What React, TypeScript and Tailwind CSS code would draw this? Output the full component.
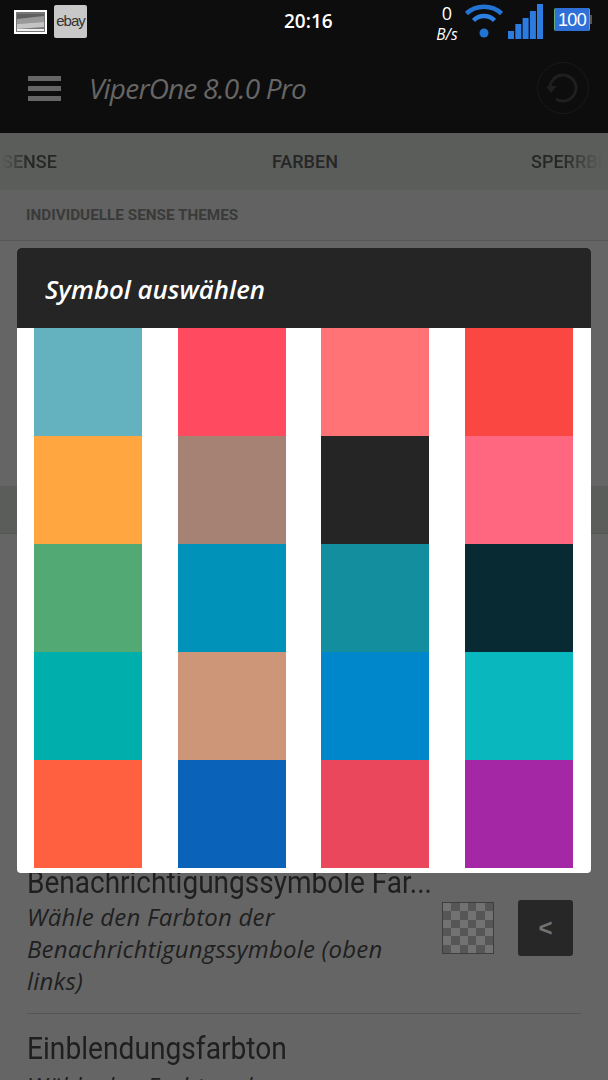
import React from 'react';

const swatches: string[] = [
  '#64b2bf', '#ff4a60', '#ff7276', '#fb4741',
  '#ffa640', '#a68274', '#252525', '#ff6680',
  '#53a973', '#0092b8', '#128e9f', '#082a32',
  '#00afab', '#ce9678', '#0086cb', '#08b8be',
  '#ff6040', '#0a63b9', '#eb475c', '#a428a5',
];

const comic = "font-['Open_Sans',sans-serif] italic";

function Wifi() {
  return (
    <svg width="38" height="34" viewBox="0 0 38 34" fill="none">
      <path d="M1.5 9.5 C11 0.5 27 0.5 36.5 9.5" stroke="#2373d2" strokeWidth="4.5" />
      <path d="M8.5 16.5 C14 10.5 24 10.5 29.5 16.5" stroke="#2b80e2" strokeWidth="4.5" />
      <circle cx="19" cy="29" r="4.5" fill="#2274d4" />
    </svg>
  );
}

function Signal() {
  return (
    <svg width="35" height="35" viewBox="0 0 35 35" fill="#2c7be0">
      <rect x="0" y="27" width="6" height="8" />
      <rect x="7.3" y="20" width="6" height="15" />
      <rect x="14.6" y="14" width="6" height="21" />
      <rect x="21.9" y="7" width="6" height="28" />
      <rect x="29" y="0" width="6" height="35" />
    </svg>
  );
}

function Battery() {
  return (
    <div className="relative flex h-[23px] w-[36px] items-center justify-center rounded-[2px] border-x border-[#5fae7a] bg-[#2f6fd8] font-['Liberation_Sans',sans-serif] text-[18px] leading-none tracking-[-0.6px] text-white">
      100
      <span className="absolute -right-[3px] top-[7px] h-[9px] w-[2px] bg-[#555]" />
    </div>
  );
}

function Thumb() {
  return (
    <svg width="33" height="24" viewBox="0 0 33 24">
      <rect x="1" y="1" width="31" height="22" fill="#777" stroke="#fff" strokeWidth="2" />
      <rect x="3" y="4" width="27" height="5" fill="#606060" />
      <path d="M3 9 L30 6 V12 L3 14Z" fill="#999" />
      <path d="M3 14 L30 12 V17 L3 19Z" fill="#c4c4c4" />
      <rect x="3" y="19" width="27" height="2" fill="#eee" />
    </svg>
  );
}

function Checker() {
  const cells = Array.from({ length: 36 }, (_, i) => i);
  return (
    <div className="grid h-[52px] w-[52px] grid-cols-6 grid-rows-6 border border-[#3e3e3e] bg-[#727272]">
      {cells.map((i) => (
        <span key={i} className={(Math.floor(i / 6) + i % 6) % 2 === 1 ? 'bg-[#565656]' : 'bg-[#727272]'} />
      ))}
    </div>
  );
}

export default function App() {
  return (
    <div className="relative h-[1080px] w-[608px] overflow-hidden bg-[#656565]">
      {/* Top bar */}
      <div className="h-[133px] bg-[#0d0d0d]">
        <div className="flex h-[45px] items-start pl-[14px] pt-[5px]">
          <div className="mt-[5px] flex h-[24px] w-[33px] items-center justify-center">
            <Thumb />
          </div>
          <div className="ml-[7px] flex h-[33px] w-[33px] items-center justify-center rounded-[2px] bg-[#c8c8c8] font-['Liberation_Sans',sans-serif] text-[15px] tracking-[-1px] text-[#333]">
            ebay
          </div>
          <span className="ml-[197px] mt-[3px] w-[50px] font-['Open_Sans',sans-serif] text-[19px] font-semibold leading-[26px] text-white">20:16</span>
          <div className={`${comic} ml-[99px] -mt-[2px] flex w-[28px] flex-col items-center text-white`}>
            <span className="text-[18px] leading-[20px] not-italic">0</span>
            <span className="mt-[3px] whitespace-nowrap text-[15.5px] leading-[17px]">B/s</span>
          </div>
          <div className="ml-[4px] -mt-[1px] flex items-start">
            <Wifi />
            <div className="ml-[5px]"><Signal /></div>
            <div className="ml-[11px] mt-[4px]"><Battery /></div>
          </div>
        </div>
        <div className="flex h-[88px] items-center pl-[28px] pr-[19px] pb-[2px]">
          <div className="flex w-[33px] flex-col gap-[5px]">
            <span className="h-[5px] bg-[#666]" />
            <span className="h-[5px] bg-[#666]" />
            <span className="h-[5px] bg-[#666]" />
          </div>
          <span className={`${comic} ml-[28px] text-[28px] leading-[36px] tracking-[-0.8px] text-[#666]`}>ViperOne 8.0.0 Pro</span>
          <div className="ml-auto flex h-[52px] w-[52px] items-center justify-center rounded-full border-[1.5px] border-[#191919]">
            <svg width="32" height="32" viewBox="0 0 32 32" fill="none">
              <path d="M3 17 A13 13 0 1 1 9 27" stroke="#1f1f1f" strokeWidth="3" />
              <path d="M-1 14 L4 21 L10 14Z" fill="#1f1f1f" />
            </svg>
          </div>
        </div>
      </div>

      {/* Tabs */}
      <div className="relative flex h-[57px] items-center bg-[#5b5d5b] font-['Roboto',sans-serif] text-[18px] font-medium text-[#262626]">
        <span className="absolute left-[2px] bg-gradient-to-r from-[#5b5d5b] to-[#262626] to-50% bg-clip-text text-transparent">SENSE</span>
        <span className="absolute left-[272px]">FARBEN</span>
        <span className="absolute left-[531px] whitespace-nowrap bg-gradient-to-r from-[#262626] from-40% to-[#5b5d5b] bg-clip-text text-transparent">SPERRBI</span>
      </div>

      {/* Section title */}
      <div className="flex h-[51px] items-center border-b border-[#585858] bg-[#616261] pl-[26px] pt-[1px] font-['Roboto',sans-serif] text-[15.3px] font-bold text-[#3a3a3a]">
        INDIVIDUELLE SENSE THEMES
      </div>

      {/* Band behind the dialog */}
      <div className="mt-[245px] h-[48px] border-b border-[#555555] bg-[#5b5d5b]" />

      {/* List under the dialog */}
      <div className="px-[27px] pt-[328px] text-[#1f1f1f]">
        <div className="origin-left scale-x-[0.875] font-['Roboto',sans-serif] text-[32px] leading-[40px] whitespace-nowrap">
          Benachrichtigungssymbole Far...
        </div>
        <div className="-mt-[1px] flex items-start justify-between border-b border-[#545454] pb-[16px]">
          <p className={`${comic} w-[390px] text-[24px] leading-[32px] tracking-[0.2px]`}>
            Wähle den Farbton der Benachrichtigungssymbole (oben links)
          </p>
          <div className="mr-[8px] flex items-start gap-[24px]">
            <div className="mt-[1px]"><Checker /></div>
            <div className="-mt-[1px] flex h-[56px] w-[55px] items-center justify-center rounded-[3px] bg-[#272727] font-['Liberation_Sans',sans-serif] text-[24px] font-bold text-[#727272]">
              &lt;
            </div>
          </div>
        </div>
        <div className="origin-left scale-x-[0.88] pt-[12px] font-['Roboto',sans-serif] text-[32px] leading-[44px] whitespace-nowrap">Einblendungsfarbton</div>
        <div className={`${comic} text-[24px] leading-[32px] tracking-[0.2px]`}>Wähle den Farbton der</div>
      </div>

      {/* Dialog */}
      <div className="absolute left-[17px] top-[248px] w-[574px] overflow-hidden rounded-[4px] bg-white pb-[5px]">
        <div className={`${comic} flex h-[80px] items-center bg-[#252525] pl-[28px] pt-[3px] text-[25.8px] font-semibold text-white`}>
          Symbol auswählen
        </div>
        <div className="grid grid-cols-[repeat(4,108px)] gap-x-[35.67px] pl-[17px]">
          {swatches.map((color) => (
            <div key={color} className="h-[108px] w-[108px]" style={{ backgroundColor: color }} />
          ))}
        </div>
      </div>
    </div>
  );
}
